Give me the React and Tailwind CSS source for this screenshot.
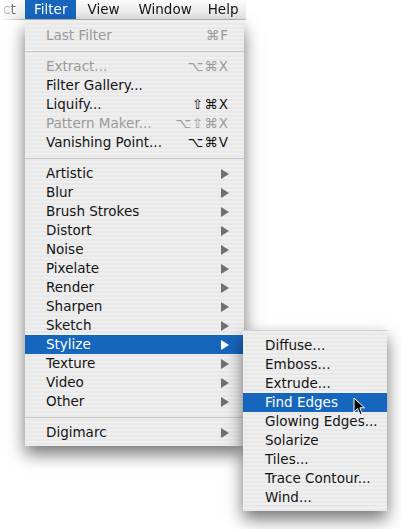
import React from 'react';

const font = { fontFamily: '"DejaVu Sans", "Liberation Sans", sans-serif' };

const mainItems = [
    { label: 'Last Filter', keys: '⌘F', disabled: true },
    { sep: true },
    { label: 'Extract...', keys: '⌥⌘X', disabled: true },
    { label: 'Filter Gallery...' },
    { label: 'Liquify...', keys: '⇧⌘X' },
    { label: 'Pattern Maker...', keys: '⌥⇧⌘X', disabled: true },
    { label: 'Vanishing Point...', keys: '⌥⌘V' },
    { sep: true },
    { label: 'Artistic', sub: true },
    { label: 'Blur', sub: true },
    { label: 'Brush Strokes', sub: true },
    { label: 'Distort', sub: true },
    { label: 'Noise', sub: true },
    { label: 'Pixelate', sub: true },
    { label: 'Render', sub: true },
    { label: 'Sharpen', sub: true },
    { label: 'Sketch', sub: true },
    { label: 'Stylize', sub: true, active: true },
    { label: 'Texture', sub: true },
    { label: 'Video', sub: true },
    { label: 'Other', sub: true },
    { sep: true },
    { label: 'Digimarc', sub: true },
];

const stylizeItems = [
    'Diffuse...',
    'Emboss...',
    'Extrude...',
    'Find Edges',
    'Glowing Edges...',
    'Solarize',
    'Tiles...',
    'Trace Contour...',
    'Wind...',
];

const stripes =
    'bg-[repeating-linear-gradient(to_bottom,#efefef_0px,#efefef_2px,#e8e8e8_2px,#e8e8e8_4px)]';

const Arrow = ({ active }) => (
    <svg width="8" height="10" viewBox="0 0 8 10">
        <path d="M0 0 L8 5 L0 10 Z" fill={active ? '#ffffff' : '#6f6f6f'} />
    </svg>
);

const MenuRow = ({ item }) => {
    if (item.sep) {
        return (
            <div className="h-[12px] flex items-center">
                <div className="w-full h-px bg-[#c8c8c8]" />
            </div>
        );
    }
    const tone = item.active
        ? 'bg-[#1766bd] text-white'
        : item.disabled
            ? 'text-[#9a9a9a]'
            : 'text-[#141414]';
    return (
        <div className={`h-[19px] flex items-center pl-[21px] pr-[15px] ${tone}`}>
            <span className="flex-1 text-[13.5px] leading-none">{item.label}</span>
            {item.keys && (
                <span className="text-[13.5px] leading-none tracking-[1px]">{item.keys}</span>
            )}
            {item.sub && <Arrow active={item.active} />}
        </div>
    );
};

const Cursor = () => (
    <svg width="13" height="19" viewBox="0 0 13 19" className="absolute left-[353px] top-[397px]">
        <path
            d="M1 1 L1 15 L4.5 11.5 L7 17.5 L9.2 16.6 L6.8 10.8 L11.5 10.8 Z"
            fill="#000"
            stroke="#fff"
            strokeWidth="1"
            strokeLinejoin="round"
        />
    </svg>
);

export default function App() {
    return (
        <div className="relative w-[401px] h-[529px] bg-white overflow-hidden" style={font}>
            {/* Menu bar */}
            <div className="w-[246px] h-[20px] flex items-center text-[13.5px] text-[#141414] bg-gradient-to-b from-[#fbfbfb] to-[#e4e4e4] border-b border-[#b9b9b9] [mask-image:linear-gradient(to_right,transparent_0px,black_22px)]">
                <span className="pl-[3px] w-[25px]">ct</span>
                <span className="h-full flex items-center px-[9px] bg-[#1766bd] text-white">Filter</span>
                <span className="pl-[11px]">View</span>
                <span className="pl-[19px]">Window</span>
                <span className="pl-[16px]">Help</span>
            </div>

            {/* Filter menu */}
            <div
                className={`absolute left-[25px] top-[21px] w-[219px] pt-[5px] pb-[4px] ${stripes} shadow-[0_8px_16px_rgba(0,0,0,0.55)]`}
            >
                {mainItems.map((item, i) => (
                    <MenuRow key={i} item={item} />
                ))}
            </div>

            {/* Stylize submenu */}
            <div
                className={`absolute left-[243px] top-[330px] w-[144px] pt-[5px] pb-[4px] border-t border-[#d0d0d0] ${stripes} shadow-[0_8px_16px_rgba(0,0,0,0.55)]`}
            >
                {stylizeItems.map(label => (
                    <div
                        key={label}
                        className={`h-[19px] flex items-center pl-[22px] text-[13.5px] leading-none ${label === 'Find Edges' ? 'bg-[#1766bd] text-white' : 'text-[#141414]'
                            }`}
                    >
                        {label}
                    </div>
                ))}
            </div>

            <Cursor />
        </div>
    );
}
